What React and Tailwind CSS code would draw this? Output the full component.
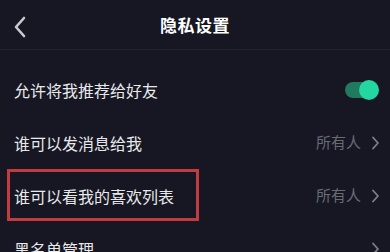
export default function App() {
  const Chevron = () => (
    <svg width="9" height="14" viewBox="0 0 9 14" className="ml-[10px]">
      <path d="M2 1.5 L7 7 L2 12.5" fill="none" stroke="#7d7f88" strokeWidth="1.8" strokeLinecap="round" strokeLinejoin="round" />
    </svg>
  );

  return (
    <div
      className="w-[390px] h-[252px] overflow-hidden bg-[#161722] text-[#e9e9ec]"
      style={{ fontFamily: '"Noto Sans CJK SC", "Noto Sans", sans-serif' }}
    >
      {/* header */}
      <div className="relative h-[50px] flex items-center justify-center border-b border-[#22242f]">
        <svg width="14" height="22" viewBox="0 0 14 22" className="absolute left-[13px] top-[16px]">
          <path d="M11 2 L3 11 L11 20" fill="none" stroke="#c9cacf" strokeWidth="2.6" strokeLinecap="round" strokeLinejoin="round" />
        </svg>
        <span className="text-[17px] font-bold text-white tracking-[0.5px]">隐私设置</span>
      </div>

      <div className="pt-[13px]">
        <div className="h-[53px] flex items-center justify-between pl-[14px] pr-[11px]">
          <span className="text-[16px]">允许将我推荐给好友</span>
          <div className="relative w-[34px] h-[20px] flex items-center">
            <div className="w-[30px] h-[16px] rounded-full bg-[#1f7a5f]" />
            <div className="absolute right-0 top-0 w-[20px] h-[20px] rounded-full bg-[#22d7a2]" />
          </div>
        </div>

        <div className="h-[53px] flex items-center justify-between pl-[14px] pr-[10px]">
          <span className="text-[16px]">谁可以发消息给我</span>
          <div className="flex items-center">
            <span className="text-[15px] text-[#696b75]">所有人</span>
            <Chevron />
          </div>
        </div>

        <div className="relative h-[53px] flex items-center justify-between pl-[14px] pr-[10px]">
          <span className="text-[16px]">谁可以看我的喜欢列表</span>
          <div className="flex items-center">
            <span className="text-[15px] text-[#696b75]">所有人</span>
            <Chevron />
          </div>
          <div className="absolute left-[7px] top-0 w-[192px] h-[52px] border-[3px] border-[#c23b40]" />
        </div>

        <div className="h-[53px] flex items-center justify-between pl-[14px] pr-[10px]">
          <span className="text-[16px]">黑名单管理</span>
          <Chevron />
        </div>
      </div>
    </div>
  );
}
